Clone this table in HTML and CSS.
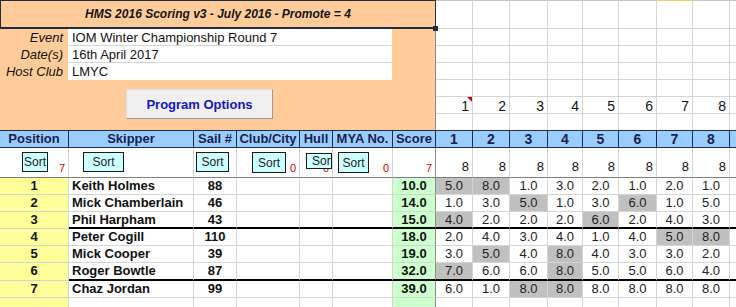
FILE: index.html
```html
<!DOCTYPE html>
<html lang="en">
<head>
  <meta charset="UTF-8" />
  <meta name="viewport" content="width=device-width, initial-scale=1.0"/>
  <title>HMS 2016 Scoring v3</title>
  <link rel="stylesheet" href="styles.css">
</head>
<body>
  <div class="sheet">

    <!-- regatta details block -->
    <div class="banner">
      <div class="title">HMS 2016 Scoring v3 - July 2016 - Promote = 4</div>
      <div class="event">
        <div class="label">Event</div><div class="value">IOM Winter Championship Round 7</div>
        <div class="label">Date(s)</div><div class="value">16th April 2017</div>
        <div class="label">Host Club</div><div class="value">LMYC</div>
      </div>
      <button class="options">Program Options</button>
    </div>

    <!-- race numbers above the results -->
    <div class="race-col"><span class="race-no note">1</span></div>
    <div class="race-col"><span class="race-no">2</span></div>
    <div class="race-col"><span class="race-no">3</span></div>
    <div class="race-col"><span class="race-no">4</span></div>
    <div class="race-col"><span class="race-no">5</span></div>
    <div class="race-col"><span class="race-no">6</span></div>
    <div class="race-col hot"><span class="race-no">7</span></div>
    <div class="race-col"><span class="race-no">8</span></div>
    <div class="race-col"></div>

    <!-- column headings -->
    <div class="row">
      <div class="head">Position</div>
      <div class="head">Skipper</div>
      <div class="head">Sail #</div>
      <div class="head">Club/City</div>
      <div class="head">Hull</div>
      <div class="head">MYA No.</div>
      <div class="head">Score</div>
      <div class="head race">1</div>
      <div class="head race">2</div>
      <div class="head race">3</div>
      <div class="head race">4</div>
      <div class="head race">5</div>
      <div class="head race">6</div>
      <div class="head race">7</div>
      <div class="head race">8</div>
      <div class="head race"></div>
    </div>

    <!-- sort buttons and entry counts -->
    <div class="row">
      <div class="ctl"><button class="sort s-pos">Sort</button><span class="count">7</span></div>
      <div class="ctl"><button class="sort s-skipper">Sort</button></div>
      <div class="ctl"><button class="sort s-sail">Sort</button></div>
      <div class="ctl"><button class="sort s-club">Sort</button><span class="count">0</span></div>
      <div class="ctl"><button class="sort s-hull">Sort</button><span class="count">0</span></div>
      <div class="ctl"><button class="sort s-mya">Sort</button><span class="count">0</span></div>
      <div class="ctl total"><span class="count">7</span></div>
      <div class="ctl">8</div>
      <div class="ctl">8</div>
      <div class="ctl">8</div>
      <div class="ctl">8</div>
      <div class="ctl">8</div>
      <div class="ctl">8</div>
      <div class="ctl">8</div>
      <div class="ctl">8</div>
      <div class="ctl"></div>
    </div>

    <!-- results -->
    <div class="row">
      <div class="cell pos">1</div><div class="cell name">Keith Holmes</div><div class="cell sail">88</div>
      <div class="cell"></div><div class="cell"></div><div class="cell"></div><div class="cell score">10.0</div>
      <div class="cell r d">5.0</div><div class="cell r d">8.0</div><div class="cell r">1.0</div><div class="cell r">3.0</div>
      <div class="cell r">2.0</div><div class="cell r">1.0</div><div class="cell r">2.0</div><div class="cell r">1.0</div><div class="cell"></div>
    </div>
    <div class="row">
      <div class="cell pos">2</div><div class="cell name">Mick Chamberlain</div><div class="cell sail">46</div>
      <div class="cell"></div><div class="cell"></div><div class="cell"></div><div class="cell score">14.0</div>
      <div class="cell r">1.0</div><div class="cell r">3.0</div><div class="cell r d">5.0</div><div class="cell r">1.0</div>
      <div class="cell r">3.0</div><div class="cell r d">6.0</div><div class="cell r">1.0</div><div class="cell r">5.0</div><div class="cell"></div>
    </div>
    <div class="row cut">
      <div class="cell pos">3</div><div class="cell name">Phil Harpham</div><div class="cell sail">43</div>
      <div class="cell"></div><div class="cell"></div><div class="cell"></div><div class="cell score">15.0</div>
      <div class="cell r d">4.0</div><div class="cell r">2.0</div><div class="cell r">2.0</div><div class="cell r">2.0</div>
      <div class="cell r d">6.0</div><div class="cell r">2.0</div><div class="cell r">4.0</div><div class="cell r">3.0</div><div class="cell"></div>
    </div>
    <div class="row">
      <div class="cell pos">4</div><div class="cell name">Peter Cogill</div><div class="cell sail">110</div>
      <div class="cell"></div><div class="cell"></div><div class="cell"></div><div class="cell score">18.0</div>
      <div class="cell r">2.0</div><div class="cell r">4.0</div><div class="cell r">3.0</div><div class="cell r">4.0</div>
      <div class="cell r">1.0</div><div class="cell r">4.0</div><div class="cell r d">5.0</div><div class="cell r d">8.0</div><div class="cell"></div>
    </div>
    <div class="row">
      <div class="cell pos">5</div><div class="cell name">Mick Cooper</div><div class="cell sail">39</div>
      <div class="cell"></div><div class="cell"></div><div class="cell"></div><div class="cell score">19.0</div>
      <div class="cell r">3.0</div><div class="cell r d">5.0</div><div class="cell r">4.0</div><div class="cell r d">8.0</div>
      <div class="cell r">4.0</div><div class="cell r">3.0</div><div class="cell r">3.0</div><div class="cell r">2.0</div><div class="cell"></div>
    </div>
    <div class="row cut">
      <div class="cell pos">6</div><div class="cell name">Roger Bowtle</div><div class="cell sail">87</div>
      <div class="cell"></div><div class="cell"></div><div class="cell"></div><div class="cell score">32.0</div>
      <div class="cell r d">7.0</div><div class="cell r">6.0</div><div class="cell r">6.0</div><div class="cell r d">8.0</div>
      <div class="cell r">5.0</div><div class="cell r">5.0</div><div class="cell r">6.0</div><div class="cell r">4.0</div><div class="cell"></div>
    </div>
    <div class="row">
      <div class="cell pos">7</div><div class="cell name">Chaz Jordan</div><div class="cell sail">99</div>
      <div class="cell"></div><div class="cell"></div><div class="cell"></div><div class="cell score">39.0</div>
      <div class="cell r">6.0</div><div class="cell r">1.0</div><div class="cell r d">8.0</div><div class="cell r d">8.0</div>
      <div class="cell r">8.0</div><div class="cell r">8.0</div><div class="cell r">8.0</div><div class="cell r">8.0</div><div class="cell"></div>
    </div>
    <div class="row">
      <div class="cell pos"></div><div class="cell"></div><div class="cell"></div>
      <div class="cell"></div><div class="cell"></div><div class="cell"></div><div class="cell score"></div>
      <div class="cell"></div><div class="cell"></div><div class="cell"></div><div class="cell"></div>
      <div class="cell"></div><div class="cell"></div><div class="cell"></div><div class="cell"></div><div class="cell"></div>
    </div>

  </div>
</body>
</html>
```

FILE: styles.css
```css
*, *::before, *::after {
  box-sizing: border-box;
}
body {
  margin: 0;
  overflow: hidden;
  background: #fff;
  font-family: "Liberation Sans", Arial, sans-serif;
  font-size: 13px;
  color: #111;
}
.sheet {
  display: grid;
  grid-template-columns: 69px 125px 43px 63px 33px 60px 43px 37px 37px 38px 35px 36px 38px 36px 37px 40px;
  grid-template-rows: 29px repeat(5, 17px) 16px 18px 30px repeat(5, 17px) 18px 17px 17px;
  width: 770px;
}
.row {
  display: contents;
}

/* top block */
.banner {
  grid-column: 1 / 8;
  grid-row: 1 / 8;
  background: linear-gradient(#8c8c8c, #8c8c8c) right top / 1px 100% no-repeat, #ffcc99;
}
.title {
  position: relative;
  height: 29px;
  border: 1px solid #1c2e42;
  border-bottom-width: 2px;
  text-align: center;
  font-size: 12px;
  font-weight: bold;
  font-style: italic;
  line-height: 26px;
  color: #151515;
}
.title::after {
  content: "";
  position: absolute;
  right: -3px;
  bottom: -4px;
  width: 5px;
  height: 5px;
  background: #1c2e42;
}
.event {
  display: grid;
  grid-template-columns: 68px 324px;
  grid-auto-rows: 17px;
}
.label {
  font-style: italic;
  text-align: right;
  padding-right: 5px;
  line-height: 17px;
}
.value {
  background: #fff;
  padding-left: 4px;
  line-height: 17px;
  border-bottom: 1px solid #d4d4d4;
}
.value:last-child {
  border-bottom: 0;
}
.options {
  display: block;
  margin: 9px 0 0 126px;
  width: 147px;
  height: 30px;
  padding: 0;
  background: #f0f0f0;
  border: 1px solid;
  border-color: #dedede #9a9a9a #9a9a9a #dedede;
  font: bold 13px "Liberation Sans", Arial, sans-serif;
  color: #1515c8;
}

/* empty grid above the race columns */
.race-col {
  --top: #c4c4c4;
  grid-row: span 7;
  border-right: 1px solid #d4d4d4;
  background:
    linear-gradient(var(--top), var(--top)) 0 0 / 100% 1px no-repeat,
    repeating-linear-gradient(#d4d4d4 0 1px, transparent 1px 17px) 0 28px / 100% 86px no-repeat;
  font-size: 14px;
  text-align: right;
}
.race-col.hot {
  --top: #f2cf6b;
}
.race-no {
  display: block;
  position: relative;
  margin-top: 97px;
  height: 16px;
  padding-right: 3px;
  line-height: 18px;
}
.race-no.note::after {
  content: "";
  position: absolute;
  top: 0;
  right: 0;
  border-top: 5px solid #d40000;
  border-left: 5px solid transparent;
}

/* headings */
.head {
  background: #99ccff;
  border-top: 1px solid #1f2a44;
  border-bottom: 1px solid #1f2a44;
  border-right: 1px solid #1f2a44;
  color: #1a1f4c;
  font-weight: bold;
  text-align: center;
  line-height: 16px;
  white-space: nowrap;
  overflow: hidden;
}
.head.race {
  font-size: 14px;
}

/* sort row */
.ctl {
  position: relative;
  display: flex;
  align-items: flex-end;
  justify-content: flex-end;
  padding: 0 3px 3px 0;
  border-right: 1px solid #d4d4d4;
  border-bottom: 1px solid #7f7f7f;
  line-height: 14px;
}
.ctl.total {
  border-right-color: #8c8c8c;
}
.count {
  color: #d00000;
  font-size: 11px;
  line-height: 12px;
}
.sort {
  position: absolute;
  top: 4px;
  height: 20px;
  padding: 0;
  background: #ccffff;
  border: 1px solid #1a1a1a;
  font: 12px "Liberation Sans", Arial, sans-serif;
  color: #222;
  overflow: hidden;
  white-space: nowrap;
}
.s-pos { left: 22px; width: 26px; }
.s-skipper { left: 14px; width: 41px; }
.s-sail { left: 2px; width: 33px; }
.s-club { left: 15px; width: 34px; height: 21px; }
.s-hull { left: 6px; top: 5px; width: 26px; height: 16px; text-align: left; padding-left: 5px; }
.s-mya { left: 5px; width: 31px; height: 21px; }

/* results */
.cell {
  border-right: 1px solid #d4d4d4;
  border-bottom: 1px solid #d4d4d4;
  line-height: 16px;
  white-space: nowrap;
  overflow: hidden;
}
.pos {
  background: #ffff99;
  font-weight: bold;
  text-align: center;
}
.name {
  font-weight: bold;
  padding-left: 3px;
}
.sail {
  font-weight: bold;
  text-align: center;
}
.score {
  background: #ccffcc;
  font-weight: bold;
  text-align: center;
  border-right-color: #8c8c8c;
}
.r {
  text-align: center;
  color: #222;
}
.r.d {
  background: #c0c0c0;
}
.row.cut > .cell:not(.pos) {
  border-bottom: 2px solid #000;
}
```
